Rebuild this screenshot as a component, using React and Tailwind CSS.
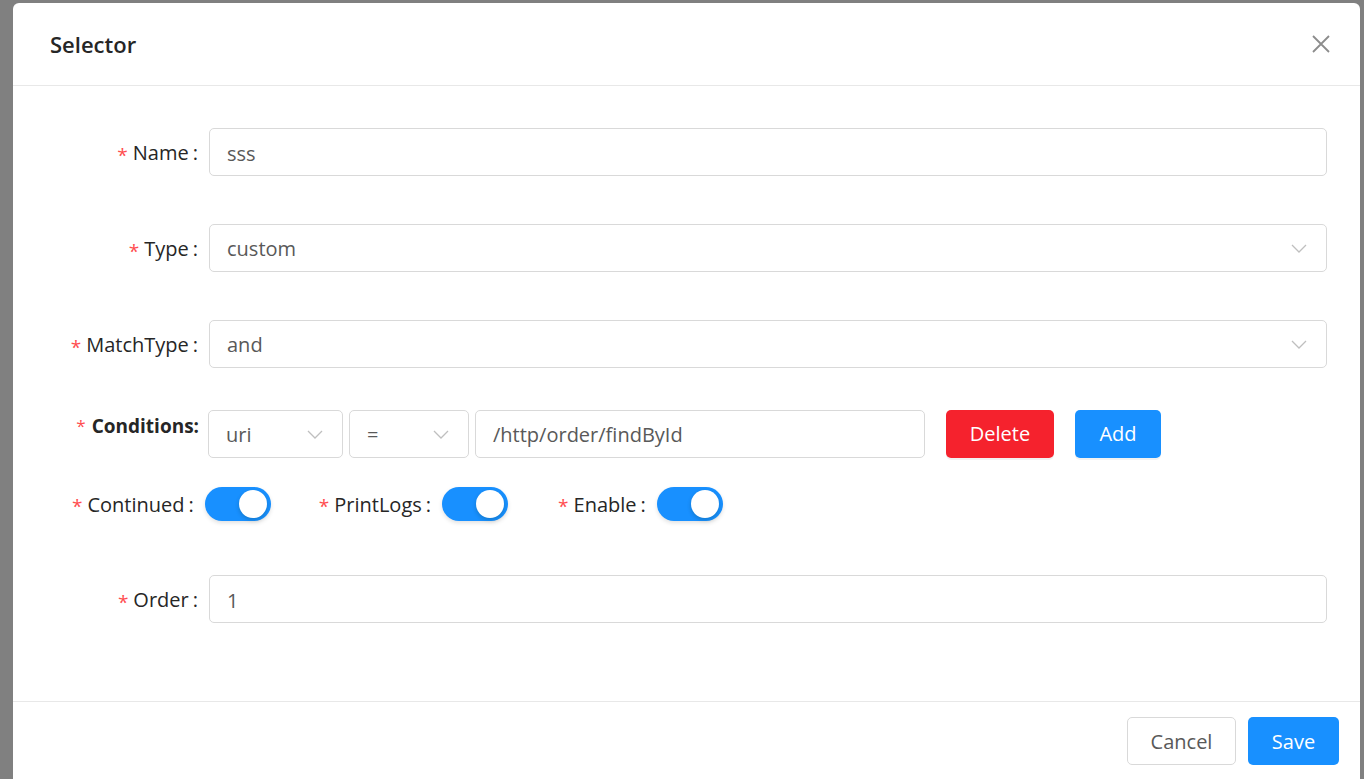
import React from 'react';

const font = { fontFamily: '"Open Sans", "Noto Sans", sans-serif' };

function Chevron() {
  return (
    <svg width="16" height="9" viewBox="0 0 16 9" fill="none" className="shrink-0">
      <path d="M1 1l7 7 7-7" stroke="#bfbfbf" strokeWidth="1.3" />
    </svg>
  );
}

function Star() {
  return <span className="mr-[5px] text-[19px] text-[#ff4d4f] leading-none relative top-[2px]">*</span>;
}

function Label({ text }) {
  return (
    <div className="w-[186px] shrink-0 flex items-center justify-end text-[20px] text-[#262626] pt-[2px]">
      <Star />
      <span>{text}</span>
      <span className="ml-[4px] mr-[1px]">:</span>
    </div>
  );
}

function TextInput({ value }) {
  return (
    <div className="flex-1 h-[48px] border border-[#d9d9d9] rounded-[5px] flex items-center px-[17px] pt-[3px] text-[20px] text-[#595959]">
      {value}
    </div>
  );
}

function Select({ value, className }) {
  return (
    <div className={`h-[48px] border border-[#d9d9d9] rounded-[5px] flex items-center justify-between pl-[17px] pr-[19px] text-[20px] text-[#595959] ${className}`}>
      <span className="relative top-[1px]">{value}</span>
      <Chevron />
    </div>
  );
}

function Toggle() {
  return (
    <div className="w-[66px] h-[34px] rounded-full bg-[#1890ff] flex items-center justify-end pr-[4px] shadow-[0_2px_4px_rgba(0,0,0,0.12)]">
      <div className="w-[28px] h-[28px] rounded-full bg-white shadow-[0_2px_4px_rgba(0,35,11,0.2)]" />
    </div>
  );
}

function SwitchField({ text, className }) {
  return (
    <div className={`flex items-center ${className}`}>
      <div className="flex items-center text-[20px] text-[#262626] pt-[1px]">
        <Star />
        <span>{text}</span>
        <span className="ml-[4px] mr-[11px]">:</span>
      </div>
      <Toggle />
    </div>
  );
}

export default function App() {
  return (
    <div className="w-[1364px] h-[779px] bg-[#808080] overflow-hidden pt-[3px] pl-[13px]" style={font}>
      <div className="w-[1347px] h-[820px] bg-white rounded-t-[6px] flex flex-col">
        <div className="h-[83px] shrink-0 border-b border-[#e8e8e8] flex items-center justify-between pl-[37px] pr-[30px]">
          <span className="text-[22px] font-semibold text-[#262626]">Selector</span>
          <svg width="18" height="18" viewBox="0 0 18 18" fill="none">
            <path d="M1 1l16 16M17 1L1 17" stroke="#8c8c8c" strokeWidth="1.8" />
          </svg>
        </div>

        <div className="h-[615px] shrink-0 pr-[33px]">
          <div className="flex items-center mt-[42px]">
            <Label text="Name" />
            <div className="w-[10px]" />
            <TextInput value="sss" />
          </div>
          <div className="flex items-center mt-[48px]">
            <Label text="Type" />
            <div className="w-[10px]" />
            <Select value="custom" className="flex-1" />
          </div>
          <div className="flex items-center mt-[48px]">
            <Label text="MatchType" />
            <div className="w-[10px]" />
            <Select value="and" className="flex-1" />
          </div>

          <div className="flex items-start mt-[42px]">
            <div className="w-[195px] shrink-0 flex justify-end items-start pt-[2px] pr-[9px] text-[19px] font-bold text-[#262626]">
              <span className="text-[17px] text-[#ff4d4f] mr-[6px] relative top-[1px] font-normal">*</span>
              <span>Conditions:</span>
            </div>
            <Select value="uri" className="w-[135px]" />
            <Select value="=" className="w-[120px] ml-[6px]" />
            <div className="w-[450px] ml-[6px] h-[48px] border border-[#d9d9d9] rounded-[5px] flex items-center px-[17px] pt-[2px] text-[20px] text-[#595959]">
              /http/order/findById
            </div>
            <button className="ml-[21px] w-[108px] h-[48px] rounded-[5px] bg-[#f5222d] text-white text-[20px] shadow-[0_2px_0_rgba(0,0,0,0.05)]">
              Delete
            </button>
            <button className="ml-[21px] w-[86px] h-[48px] rounded-[5px] bg-[#1890ff] text-white text-[20px] shadow-[0_2px_0_rgba(0,0,0,0.05)]">
              Add
            </button>
          </div>

          <div className="flex items-center mt-[29px] pl-[59px]">
            <SwitchField text="Continued" />
            <SwitchField text="PrintLogs" className="ml-[48px]" />
            <SwitchField text="Enable" className="ml-[50px]" />
          </div>

          <div className="flex items-center mt-[54px]">
            <Label text="Order" />
            <div className="w-[10px]" />
            <TextInput value="1" />
          </div>
        </div>

        <div className="border-t border-[#e8e8e8] flex justify-end items-start pt-[15px] pr-[21px] gap-[12px]">
          <button className="w-[109px] h-[48px] rounded-[5px] border border-[#d9d9d9] bg-white text-[20px] text-[#595959] pt-[2px]">
            Cancel
          </button>
          <button className="w-[91px] h-[48px] rounded-[5px] bg-[#1890ff] text-white text-[20px] pt-[2px]">
            Save
          </button>
        </div>
      </div>
    </div>
  );
}
